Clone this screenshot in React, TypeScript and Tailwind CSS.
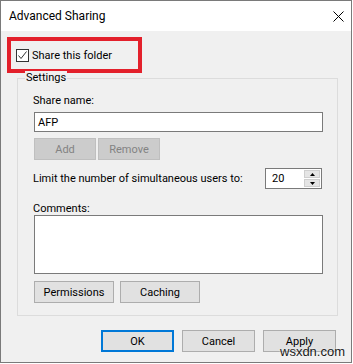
import React from "react";

const font = { fontFamily: 'Roboto, "Open Sans", sans-serif' };

function Btn({ children, w = "w-[73px]", disabled = false, primary = false }: { children: React.ReactNode; w?: string; disabled?: boolean; primary?: boolean }) {
  let cls = "bg-[#e1e1e1] border border-[#adadad] text-black";
  if (disabled) cls = "bg-[#cccccc] border border-[#bfbfbf] text-[#838383]";
  if (primary) cls = "bg-[#e1e1e1] border-2 border-[#0078d7] text-black";
  return (
    <div className={`${w} h-[22px] flex items-center justify-center leading-none ${cls}`}>{children}</div>
  );
}

export default function App() {
  return (
    <div className="w-[353px] h-[364px] bg-white text-[11px] text-black" style={font}>
      <div className="relative w-[352px] h-[363px] border border-[#7a7a7a] bg-[#f0f0f0] flex flex-col">
        <div className="h-[30px] bg-white flex items-center justify-between pl-2 pr-[7px] shrink-0">
          <span className="text-[12px] leading-none">Advanced Sharing</span>
          <svg width="11" height="11" viewBox="0 0 11 11" className="mt-[1px]">
            <path d="M0.5 0.5 L10.5 10.5 M10.5 0.5 L0.5 10.5" stroke="#000" strokeWidth="1" fill="none" />
          </svg>
        </div>

        <div className="ml-[6px] mt-[6px] w-[135px] h-[36px] border-4 border-[#e3202b] flex items-center pl-[5px]">
          <div className="w-[13px] h-[13px] border border-[#333] bg-white flex items-center justify-center">
            <svg width="11" height="11" viewBox="0 0 11 11">
              <path d="M1.5 5.5 L4 8.5 L9.5 1.5" stroke="#333" strokeWidth="1" fill="none" />
            </svg>
          </div>
          <span className="ml-[3px] leading-none text-[11px]">Share this folder</span>
        </div>

        <div className="relative ml-[16px] mt-[5px] w-[321px] border border-[#dcdcdc] pl-[16px] pr-[14px] pt-[14px] pb-[12px] flex flex-col">
          <span className="absolute left-[7px] top-[-8px] bg-[#f0f0f0] px-[1px] leading-[14px]">Settings</span>
          <span className="leading-[16px] -ml-px">Share name:</span>
          <div className="mt-[3px] w-[289px] h-[20px] border border-[#7a7a7a] bg-white flex items-center pl-[3px] leading-none">AFP</div>
          <div className="mt-[6px] flex gap-[2px]">
            <Btn w="w-[62px]" disabled>Add</Btn>
            <Btn w="w-[62px]" disabled>Remove</Btn>
          </div>
          <div className="mt-[8px] h-[21px] flex items-center justify-between w-[288px]">
            <span className="-ml-px leading-none">Limit the number of simultaneous users to:</span>
            <div className="w-[57px] h-[21px] border border-[#7a7a7a] bg-white flex">
              <div className="flex-1 flex items-center pl-[6px] leading-none">20</div>
              <div className="w-[18px] flex flex-col gap-[1px] p-[1px]">
                <div className="flex-1 bg-[#e5e5e5] border border-[#cfcfcf] flex items-center justify-center">
                  <svg width="5" height="3" viewBox="0 0 5 3"><path d="M0 3 L2.5 0 L5 3 Z" fill="#000" /></svg>
                </div>
                <div className="flex-1 bg-[#e5e5e5] border border-[#cfcfcf] flex items-center justify-center">
                  <svg width="5" height="3" viewBox="0 0 5 3"><path d="M0 0 L2.5 3 L5 0 Z" fill="#000" /></svg>
                </div>
              </div>
            </div>
          </div>
          <span className="mt-[14px] leading-[12px] -ml-px">Comments:</span>
          <div className="w-[289px] h-[59px] border border-[#7a7a7a] bg-white" />
          <div className="mt-[7px] flex gap-[6px]">
            <Btn w="w-[80px]">Permissions</Btn>
            <Btn w="w-[80px]">Caching</Btn>
          </div>
        </div>

        <div className="mt-[14px] flex justify-end gap-[8px] pr-[15px]">
          <Btn primary>OK</Btn>
          <Btn>Cancel</Btn>
          <Btn>Apply</Btn>
        </div>

        <span className="absolute left-[279px] top-[344px] text-[13px] leading-none text-[#1a1a1a]" style={{ fontFamily: '"Liberation Sans", Arial, sans-serif', textShadow: "0 0 2px #fff" }}>wsxdn.com</span>
      </div>
    </div>
  );
}
